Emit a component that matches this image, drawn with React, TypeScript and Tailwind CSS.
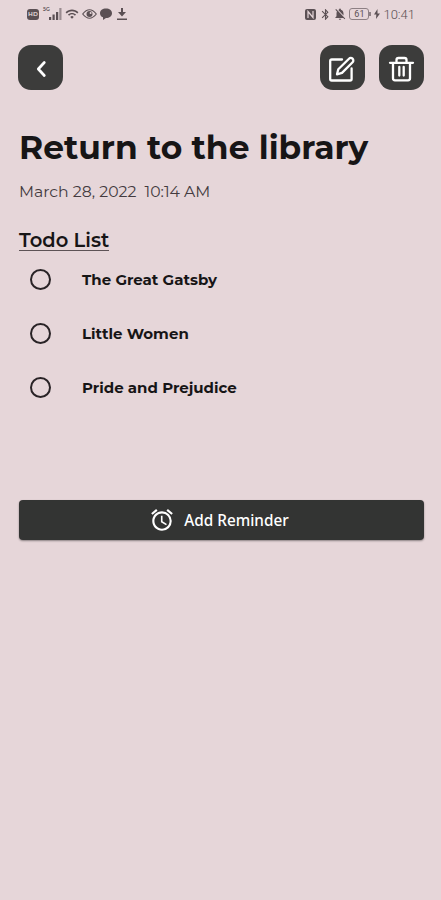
import type { ReactNode } from 'react';
import { MdAlarm, MdBluetooth, MdNotificationsOff, MdWifi } from 'react-icons/md';

const todos = ['The Great Gatsby', 'Little Women', 'Pride and Prejudice'];

export default function App() {
  return (
    <div className="h-[900px] w-[441px] overflow-hidden bg-[#e6d6d9] font-['Montserrat','Inter',sans-serif] text-[#171516]">
      <StatusBar />

      {/* Toolbar */}
      <header className="mt-[17px] flex h-[45px] items-center justify-between pr-[17.5px] pl-[18px]">
        <IconButton label="Back">
          <path d="m17.300 8.500-6 6.500 6 6.500" strokeWidth="2.700" />
        </IconButton>
        <div className="flex gap-[14px]">
          <IconButton label="Edit">
            <path d="M14 5.500H3.700Q2.200 5.500 2.200 7V25Q2.200 26.500 3.700 26.500H22Q23.600 26.500 23.600 25V14.500" />
            <path d="m9 20.300 1.300-5L21 4.700a2.300 2.300 0 0 1 3.600 3.500L14 18.900Z" />
          </IconButton>
          <IconButton label="Delete">
            <path d="M3 8.800h23M9.500 8.500V6q0-2 2-2h6q2 0 2 2V8.500M6 8.800v15.500q0 2 2 2h13q2 0 2-2V8.800M12.300 13v8.500M16.700 13v8.500" />
          </IconButton>
        </div>
      </header>

      <main className="pr-[17px] pl-[19px]">
        <h1 className="mt-[37px] text-[32.900px] leading-10 font-bold whitespace-nowrap">
          Return to the library
        </h1>
        <p className="mt-[15px] text-[15.700px] leading-5 font-normal whitespace-pre text-[#443b3f]">
          {'March 28, 2022  10:14 AM'}
        </p>

        <h2 className="mt-[27px] w-fit border-b border-[#5d5356] pt-px text-[19.500px] leading-5 font-semibold whitespace-nowrap">
          Todo List
        </h2>
        <ul className="mt-px">
          {todos.map((todo) => (
            <li key={todo} className="flex h-[54px] items-center">
              <span className="ml-[11px] size-[21px] rounded-full border-2 border-[#292326]" />
              <span className="ml-[31px] pt-[3px] text-[15px] font-bold whitespace-nowrap">{todo}</span>
            </li>
          ))}
        </ul>

        <button className="mt-[86px] -ml-[0.5px] flex h-10 w-[405px] items-center justify-center gap-[9px] rounded-[4px] bg-[#333433] pr-[4px] text-white shadow-[0_1px_2px_#0006]">
          <MdAlarm className="size-[26px]" />
          <span className="pt-px font-['Noto_Sans',sans-serif] text-[15.300px] font-medium whitespace-nowrap">
            Add Reminder
          </span>
        </button>
      </main>
    </div>
  );
}

function IconButton({ label, children }: { label: string; children: ReactNode }) {
  return (
    <button
      aria-label={label}
      className="flex size-[45px] items-center justify-center rounded-[13px] bg-[#3c3c3b] text-white"
    >
      <svg
        viewBox="0 0 28 28"
        className="size-7"
        fill="none"
        stroke="currentColor"
        strokeWidth="2.300"
        strokeLinecap="round"
        strokeLinejoin="round"
      >
        {children}
      </svg>
    </button>
  );
}

function StatusBar() {
  return (
    <div className="flex h-7 items-center justify-between pr-[26px] pl-[27px] text-[#5b5054]">
      <div className="flex items-center">
        <span className="flex h-[11px] w-3 items-center justify-center rounded-[3px] bg-[#5b5054] text-[6px] font-bold text-[#d8c9cc]">
          HD
        </span>
        <span className="ml-[4px] -mt-[8px] w-[6px] text-[5px] font-semibold">5G</span>
        <svg viewBox="0 0 13 12" className="h-3 w-[13px]" fill="currentColor">
          <path d="M0 9h2.200v3H0zM3.500 6.500h2.200V12H3.500zM7 4h2.200v8H7z" />
          <path d="M10.300 0h2.200v12h-2.200z" opacity=".55" />
        </svg>
        <MdWifi className="ml-[3px] size-[14px]" />
        {/* Eye comfort mode */}
        <svg viewBox="0 0 15 12" className="ml-[3px] h-3 w-[15px]" fill="none" stroke="currentColor">
          <path d="M.7 6Q7.500-2.500 14.300 6 7.500 14.500.7 6Z" strokeWidth="1.200" />
          <circle cx="7.500" cy="6" r="3" fill="currentColor" stroke="none" />
          <circle cx="8.600" cy="4.900" r="1" fill="#e6d6d9" stroke="none" />
        </svg>
        <svg viewBox="0 0 12 12" className="ml-[3px] size-3" fill="currentColor">
          <path d="M6 .5c3.500 0 6 2 6 4.700s-2.500 4.800-6 4.800l-3 2V9.300C1 8.500 0 7.200 0 5.200 0 2.500 2.500.5 6 .5Z" />
        </svg>
        <svg viewBox="0 0 12 12" className="ml-[4px] size-3" fill="currentColor">
          <path d="M5 0h2v4h3L6 8.500 2 4h3zM1 10.500h10V12H1z" />
        </svg>
      </div>

      <div className="flex items-center">
        <svg viewBox="0 0 11 11" className="size-[11px]">
          <rect width="11" height="11" rx="2" fill="currentColor" />
          <path d="M3 9V2.500l5 6V2" fill="none" stroke="#e6d6d9" strokeWidth="1.200" />
        </svg>
        <MdBluetooth className="ml-[3px] size-[13px]" />
        <MdNotificationsOff className="ml-px size-[14px]" />
        <span className="ml-[2px] flex h-3 w-[20px] items-center justify-center rounded-[3px] border border-[#8d8084] font-['Roboto',sans-serif] text-[9px] leading-none">
          61
        </span>
        <span className="h-[4px] w-[2px] bg-[#8d8084]" />
        <svg viewBox="0 0 6 10" className="ml-[3px] h-[10px] w-[6px]" fill="currentColor">
          <path d="M3.500 0 0 5.500h2.300L2 10l4-5.500H3.500z" />
        </svg>
        <span className="ml-[3px] font-['Roboto',sans-serif] text-[13px] leading-none font-light">10:41</span>
      </div>
    </div>
  );
}
